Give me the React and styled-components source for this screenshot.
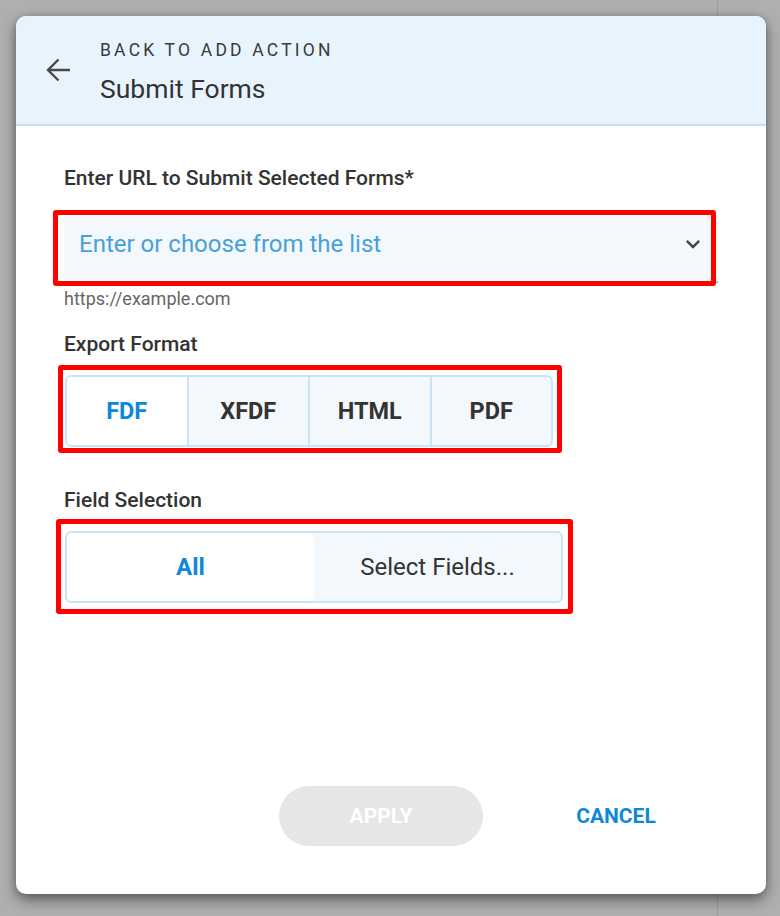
import React, { useState } from 'react';
import styled, { createGlobalStyle } from 'styled-components';


// Submit Forms action dialog, drawn over a greyed out page


const GlobalStyle = createGlobalStyle`
    html, body {
        margin: 0;
        height: 100%;
    }
    body {
        font-family: Roboto, "Noto Sans", "Liberation Sans", sans-serif;
        background: linear-gradient(to right, transparent 717px, #9c9c9c 717px, #9c9c9c 718px, transparent 718px), #afafaf;
    }
    #root {
        height: 100%;
    }
`

const formats = ['FDF', 'XFDF', 'HTML', 'PDF'];


const BackArrow = () => (
    <svg width="26" height="26" viewBox="0 0 26 26" fill="none">
        <path d="M25 13H3" stroke="#484848" strokeWidth="2.4" />
        <path d="M13.5 2.5L3 13L13.5 23.5" stroke="#484848" strokeWidth="2.4" />
    </svg>
);

const Chevron = () => (
    <svg width="28" height="28" viewBox="0 0 24 24">
        <path d="M16.59 8.59L12 13.17 7.41 8.59 6 10l6 6 6-6z" fill="#444" />
    </svg>
);


const App = () => {

    const [format, setFormat] = useState('FDF');
    const [fields, setFields] = useState('all');

    return (
        <Page>
            <GlobalStyle />
            <Modal>

                <Header>
                    <BackButton aria-label="back">
                        <BackArrow />
                    </BackButton>
                    <HeaderText>
                        <Crumb>Back to add action</Crumb>
                        <Title>Submit Forms</Title>
                    </HeaderText>
                </Header>

                <Body>
                    <Label>Enter URL to Submit Selected Forms*</Label>
                    <Annotated $stretch $l={-11} $r={2} $t={-5} $b={-3}>
                        <UrlField>
                            <UrlInput placeholder="Enter or choose from the list" />
                            <Chevron />
                        </UrlField>
                    </Annotated>
                    <Hint>https://example.com</Hint>

                    <Label $top={22}>Export Format</Label>
                    <Annotated $l={-6} $r={-9} $t={-10} $b={-6}>
                        <Segmented $width={488} $height={72}>
                            {formats.map((f) => (
                                <FormatOption
                                    key={f}
                                    $active={format === f}
                                    onClick={() => setFormat(f)}
                                >
                                    {f}
                                </FormatOption>
                            ))}
                        </Segmented>
                    </Annotated>

                    <Label $top={41}>Field Selection</Label>
                    <Annotated $l={-8} $r={-10} $t={-12} $b={-11}>
                        <Segmented $width={498} $height={72}>
                            <FieldOption $active={fields === 'all'} onClick={() => setFields('all')}>
                                All
                            </FieldOption>
                            <FieldOption $active={fields === 'select'} onClick={() => setFields('select')}>
                                Select Fields...
                            </FieldOption>
                        </Segmented>
                    </Annotated>
                </Body>

                <Footer>
                    <ApplyButton disabled>APPLY</ApplyButton>
                    <CancelButton>CANCEL</CancelButton>
                </Footer>

            </Modal>
        </Page>
    );
}

export default App;


const Page = styled.div`
    height: 100%;
    padding: 16px 14px 22px 16px;
    box-sizing: border-box;
`

const Modal = styled.div`
    width: 750px;
    height: 878px;
    background: white;
    border-radius: 10px;
    box-shadow: 0 6px 14px rgba(0, 0, 0, 0.45), 0 0 6px rgba(0, 0, 0, 0.15);
    display: flex;
    flex-direction: column;
    overflow: hidden;
`

const Header = styled.div`
    height: 108px;
    background: #e8f4fd;
    border-bottom: 2px solid #cfdde8;
    display: flex;
    align-items: center;
    padding-left: 29px;
    gap: 29px;
`

const BackButton = styled.button`
    border: none;
    background: none;
    padding: 0;
    display: flex;
    cursor: pointer;
`

const HeaderText = styled.div`
    display: flex;
    flex-direction: column;
    gap: 13px;
    margin-top: 4px;
`

const Crumb = styled.div`
    font-size: 17.5px;
    letter-spacing: 3.2px;
    text-transform: uppercase;
    color: #3a3a3a;
    line-height: 20px;
`

const Title = styled.div`
    font-size: 26.5px;
    color: #333;
    line-height: 32px;
`

const Body = styled.div`
    flex: 1;
    display: flex;
    flex-direction: column;
    align-items: flex-start;
    padding: 40px 48px 0 48px;
`

const Label = styled.div`
    font-size: 21px;
    font-weight: 500;
    color: #333;
    line-height: 24px;
    margin-top: ${(p) => p.$top || 0}px;
    margin-bottom: ${(p) => (p.$top ? 19 : 25)}px;
`

const Annotated = styled.div`
    position: relative;
    align-self: ${(p) => (p.$stretch ? 'stretch' : 'flex-start')};
    display: flex;

    &::after {
        content: '';
        position: absolute;
        left: ${(p) => p.$l}px;
        right: ${(p) => p.$r}px;
        top: ${(p) => p.$t}px;
        bottom: ${(p) => p.$b}px;
        border: 5px solid #ff0000;
        border-radius: 3px;
        pointer-events: none;
    }
`

const UrlField = styled.div`
    flex: 1;
    height: 68px;
    box-sizing: border-box;
    background: #f3f8fc;
    border-bottom: 2px solid #93b7d6;
    display: flex;
    align-items: center;
    padding: 0 11px 8px 15px;
`

const UrlInput = styled.input`
    flex: 1;
    border: none;
    background: transparent;
    outline: none;
    font-family: inherit;
    font-size: 24px;
    color: #333;
    padding: 0;

    &::placeholder {
        color: #48a0d8;
    }
`

const Hint = styled.div`
    font-size: 18px;
    color: #666;
    line-height: 22px;
    margin-top: 5px;
`

const Segmented = styled.div`
    width: ${(p) => p.$width}px;
    height: ${(p) => p.$height}px;
    box-sizing: border-box;
    border: 2px solid #c9e4f6;
    border-radius: 6px;
    background: #f3f8fc;
    display: flex;
    overflow: hidden;
    margin-left: 1px;
`

const FormatOption = styled.button`
    flex: 1;
    border: none;
    border-left: 2px solid #c9e4f6;
    background: ${(p) => (p.$active ? '#ffffff' : 'transparent')};
    color: ${(p) => (p.$active ? '#0e88d9' : '#333')};
    font-family: inherit;
    font-size: 23.5px;
    font-weight: 700;
    cursor: pointer;

    &:first-child {
        border-left: none;
    }
`

const FieldOption = styled.button`
    flex: 1;
    border: none;
    border-radius: 5px;
    background: ${(p) => (p.$active ? '#ffffff' : 'transparent')};
    color: ${(p) => (p.$active ? '#0e88d9' : '#333')};
    font-family: inherit;
    font-size: 24px;
    font-weight: ${(p) => (p.$active ? 700 : 400)};
    cursor: pointer;
`

const Footer = styled.div`
    display: flex;
    justify-content: flex-end;
    gap: 31px;
    padding: 0 48px 48px 48px;
`

const ApplyButton = styled.button`
    width: 204px;
    height: 60px;
    border: none;
    border-radius: 30px;
    background: #e6e6e6;
    color: #fff;
    font-family: inherit;
    font-size: 21px;
    font-weight: 700;
`

const CancelButton = styled.button`
    width: 204px;
    height: 60px;
    border: none;
    background: none;
    color: #0e88d9;
    font-family: inherit;
    font-size: 21px;
    font-weight: 700;
    cursor: pointer;
`
